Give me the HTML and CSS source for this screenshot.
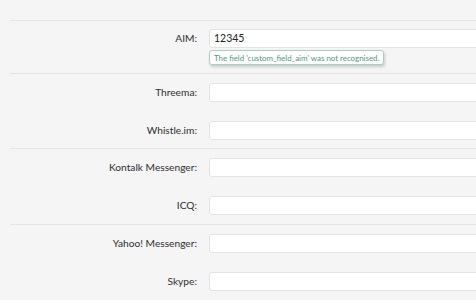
FILE: index.html
```html
<!DOCTYPE html>
<html>
<head>
<meta charset="utf-8">
<link rel="stylesheet" href="styles.css">
</head>
<body>
<div class="form">
  <div class="top"></div>
  <div class="group g1">
    <div class="row">
      <div class="label">AIM:</div>
      <div class="field">
        <div class="input">12345</div>
        <div class="tip">The field 'custom_field_aim' was not recognised.</div>
      </div>
    </div>
  </div>
  <div class="group g2">
    <div class="row">
      <div class="label">Threema:</div>
      <div class="field"><div class="input"></div></div>
    </div>
    <div class="row">
      <div class="label">Whistle.im:</div>
      <div class="field"><div class="input"></div></div>
    </div>
  </div>
  <div class="group">
    <div class="row">
      <div class="label">Kontalk Messenger:</div>
      <div class="field"><div class="input"></div></div>
    </div>
    <div class="row">
      <div class="label">ICQ:</div>
      <div class="field"><div class="input"></div></div>
    </div>
  </div>
  <div class="group">
    <div class="row">
      <div class="label">Yahoo! Messenger:</div>
      <div class="field"><div class="input"></div></div>
    </div>
    <div class="row">
      <div class="label">Skype:</div>
      <div class="field"><div class="input"></div></div>
    </div>
  </div>
</div>
</body>
</html>
```

FILE: styles.css
```css
html, body {
  margin: 0;
  padding: 0;
  background: #f5f5f5;
  overflow: hidden;
}
body {
  font-family: Lato, "Liberation Sans", sans-serif;
  font-size: 10.2px;
  color: #2e2e2e;
}
.form {
  width: 476px;
  overflow: hidden;
}
.top {
  height: 20px;
}
.group {
  margin-left: 10px;
  border-top: 1px solid #e4e4e4;
  padding: 9px 0 9px 0;
  display: flex;
  flex-direction: column;
  gap: 19px;
}
.g1 {
  padding-top: 8px;
  padding-bottom: 8px;
}
.g2 {
  padding-bottom: 8px;
}
.row {
  display: flex;
  align-items: flex-start;
}
.label {
  width: 187px;
  text-align: right;
  line-height: 19px;
  padding-right: 12px;
  flex: none;
}
.field {
  flex: none;
  width: 300px;
}
.input {
  box-sizing: border-box;
  height: 19px;
  width: 300px;
  background: #fff;
  border: 1px solid #e3e3e3;
  border-radius: 3px;
  padding: 0 4px;
  line-height: 17px;
  color: #222;
  font-size: 10.5px;
}
.tip {
  display: inline-block;
  margin-top: 2px;
  padding: 0 4px;
  height: 15px;
  line-height: 14px;
  box-sizing: border-box;
  background: #fff;
  border: 1px solid #a9cfc1;
  border-radius: 3px;
  box-shadow: 1px 2px 3px rgba(0, 0, 0, 0.18);
  color: #4e9a7f;
  font-size: 7.9px;
  letter-spacing: 0;
}
```
